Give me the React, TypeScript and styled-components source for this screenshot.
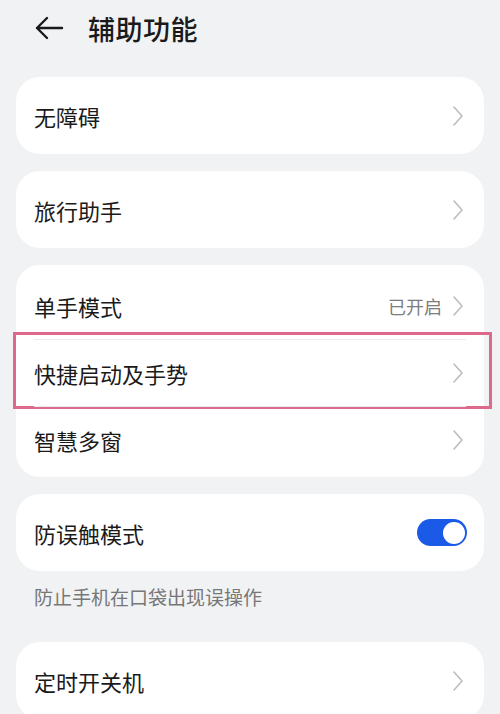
import React from 'react';
import styled, { createGlobalStyle } from 'styled-components';

const GlobalStyle = createGlobalStyle`
  html, body {
    margin: 0;
    padding: 0;
    background: #f1f2f4;
  }
  body {
    font-family: "Noto Sans CJK SC", "Noto Sans", sans-serif;
    color: #1a1a1a;
  }
`;

type Row = {
  label: string;
  value?: string;
  highlight?: boolean;
};

const groups: Row[][] = [
  [{ label: '无障碍' }],
  [{ label: '旅行助手' }],
  [
    { label: '单手模式', value: '已开启' },
    { label: '快捷启动及手势', highlight: true },
    { label: '智慧多窗' },
  ],
];

const Chevron: React.FC = () => (
  <svg width="12" height="22" viewBox="0 0 12 22" fill="none">
    <path d="M2 2 L10 11 L2 20" stroke="#bdbdbd" strokeWidth="1.6" strokeLinecap="round" strokeLinejoin="round" />
  </svg>
);

const BackArrow: React.FC = () => (
  <svg width="30" height="26" viewBox="0 0 30 26" fill="none">
    <path d="M28 13 H3 M13 3 L3 13 L13 23" stroke="#1a1a1a" strokeWidth="2.4" strokeLinecap="round" strokeLinejoin="round" />
  </svg>
);

const App: React.FC = () => (
  <>
    <GlobalStyle />
    <Page>
      <Header>
        <BackButton><BackArrow /></BackButton>
        <Title>辅助功能</Title>
      </Header>

      <List>
        {groups.map((rows, gi) => (
          <Card key={gi} $multi={rows.length > 1}>
            {rows.map((row, ri) => (
              <Item key={row.label} $multi={rows.length > 1} $divider={ri > 0}>
                <Label>{row.label}</Label>
                <Trail>
                  {row.value && <Value>{row.value}</Value>}
                  <Chevron />
                </Trail>
                {row.highlight && <Highlight />}
              </Item>
            ))}
          </Card>
        ))}

        <Section>
          <Card>
            <Item>
              <Label>防误触模式</Label>
              <Switch>
                <Knob />
              </Switch>
            </Item>
          </Card>
          <Hint>防止手机在口袋出现误操作</Hint>
        </Section>

        <Card>
          <Item>
            <Label>定时开关机</Label>
            <Trail>
              <Chevron />
            </Trail>
          </Item>
        </Card>
      </List>
    </Page>
  </>
);

const Page = styled.div`
  width: 500px;
  height: 714px;
  overflow: hidden;
  background: #f1f2f4;
`;

const Header = styled.div`
  display: flex;
  align-items: center;
  height: 56px;
  padding: 0 0 0 34px;
  box-sizing: border-box;
`;

const BackButton = styled.div`
  display: flex;
  align-items: center;
  width: 54px;
`;

const Title = styled.h1`
  margin: 0;
  font-size: 27px;
  font-weight: 500;
  letter-spacing: 0.5px;
  color: #1a1a1a;
`;

const List = styled.div`
  display: flex;
  flex-direction: column;
  gap: 17px;
  padding: 21px 16px 0;
`;

const Section = styled.div`
  display: flex;
  flex-direction: column;
`;

const Card = styled.div<{ $multi?: boolean }>`
  background: #ffffff;
  border-radius: 24px;
  padding: ${({ $multi }) => ($multi ? '7px 0 4px' : '0')};
  display: flex;
  flex-direction: column;
`;

const Item = styled.div<{ $multi?: boolean; $divider?: boolean }>`
  position: relative;
  display: flex;
  align-items: center;
  justify-content: space-between;
  height: ${({ $multi }) => ($multi ? '67px' : '77px')};
  padding: 0 20px 0 18px;

  &::before {
    content: '';
    display: ${({ $divider }) => ($divider ? 'block' : 'none')};
    position: absolute;
    top: 0;
    left: 18px;
    right: 18px;
    height: 1px;
    background: #ebebeb;
  }
`;

const Label = styled.span`
  font-size: 22px;
  color: #1a1a1a;
`;

const Trail = styled.div`
  display: flex;
  align-items: center;
  gap: 10px;
`;

const Value = styled.span`
  font-size: 18px;
  color: #7d7d7d;
`;

const Highlight = styled.div`
  position: absolute;
  top: -7px;
  bottom: -3px;
  left: -3px;
  right: -8px;
  border: 3px solid #de6a8b;
  pointer-events: none;
`;

const Switch = styled.div`
  display: flex;
  align-items: center;
  justify-content: flex-end;
  width: 50px;
  height: 27px;
  padding: 2.5px;
  box-sizing: border-box;
  border-radius: 14px;
  background: #1a5ae6;
  margin-right: -3px;
`;

const Knob = styled.div`
  width: 22px;
  height: 22px;
  border-radius: 50%;
  background: #ffffff;
`;

const Hint = styled.p`
  margin: 14px 0 0 18px;
  font-size: 19px;
  color: #777777;
  line-height: 24px;
  padding-bottom: 16px;
`;

export default App;
